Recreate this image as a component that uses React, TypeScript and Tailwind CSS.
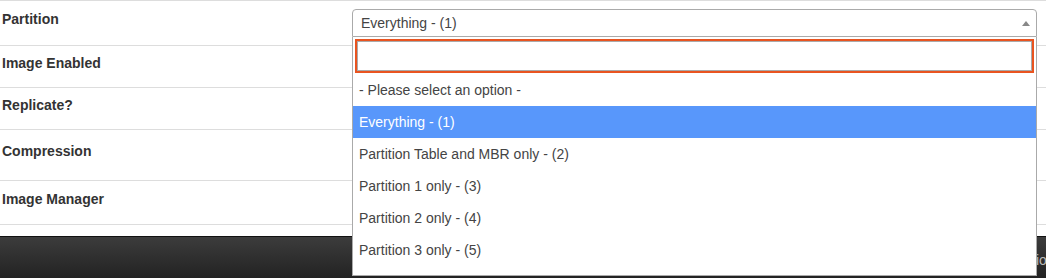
import React from "react";

const rows = [
  { label: "Partition", h: "h-[45px]", pt: "pt-[8px]" },
  { label: "Image Enabled", h: "h-[42px]", pt: "pt-[7px]" },
  { label: "Replicate?", h: "h-[42px]", pt: "pt-[7px]" },
  { label: "Compression", h: "h-[51px]", pt: "pt-[11px]" },
  { label: "Image Manager", h: "h-[45px]", pt: "pt-[8px]" },
];

const options = [
  "- Please select an option -",
  "Everything - (1)",
  "Partition Table and MBR only - (2)",
  "Partition 1 only - (3)",
  "Partition 2 only - (4)",
  "Partition 3 only - (5)",
];

export default function App() {
  return (
    <div
      className="relative w-[1046px] h-[278px] overflow-hidden bg-white text-[14px] text-[#333]"
      style={{ fontFamily: '"Liberation Sans", Arial, sans-serif' }}
    >
      <div className="flex flex-col">
        {rows.map((r, i) => (
          <div
            key={r.label}
            className={`flex border-t border-[#ddd] ${r.h} ${r.pt} ${i === rows.length - 1 ? "border-b" : ""}`}
          >
            <div className="w-[352px] pl-[2px] font-bold leading-[20px]">{r.label}</div>
          </div>
        ))}
      </div>
      <div className="h-[11px]" />
      <div className="h-[42px] border-t border-[#111] bg-gradient-to-b from-[#3c3c3c] to-[#232323] flex items-center pt-[4px] overflow-hidden">
        <span className="ml-[1008px] text-[#bbb] leading-[20px] whitespace-nowrap">Versio</span>
      </div>

      {/* Select2 open */}
      <div className="absolute left-[352px] top-[9px] w-[685px]">
        <div className="h-[28px] border border-[#aaa] rounded-t-[4px] bg-white flex items-center justify-between pl-[8px] pr-[6px]">
          <span className="text-[#444] leading-[28px]">Everything - (1)</span>
          <svg width="8" height="5" viewBox="0 0 8 5">
            <path d="M0 5 L4 0 L8 5 Z" fill="#888" />
          </svg>
        </div>
        <div className="border border-t-0 border-[#aaa] bg-white">
          <div className="px-[4px] pt-[4px] pb-[3px]">
            <div className="h-[30px] border border-[#aaa] outline-2 outline-[#e95420] bg-white" />
          </div>
          <div className="h-[201px] overflow-hidden">
            {options.map((o, i) => (
              <div
                key={o}
                className={`px-[6px] py-[6px] leading-[20px] ${i === 1 ? "bg-[#5897fb] text-white" : "text-[#444]"}`}
              >
                {o}
              </div>
            ))}
          </div>
        </div>
      </div>
    </div>
  );
}
